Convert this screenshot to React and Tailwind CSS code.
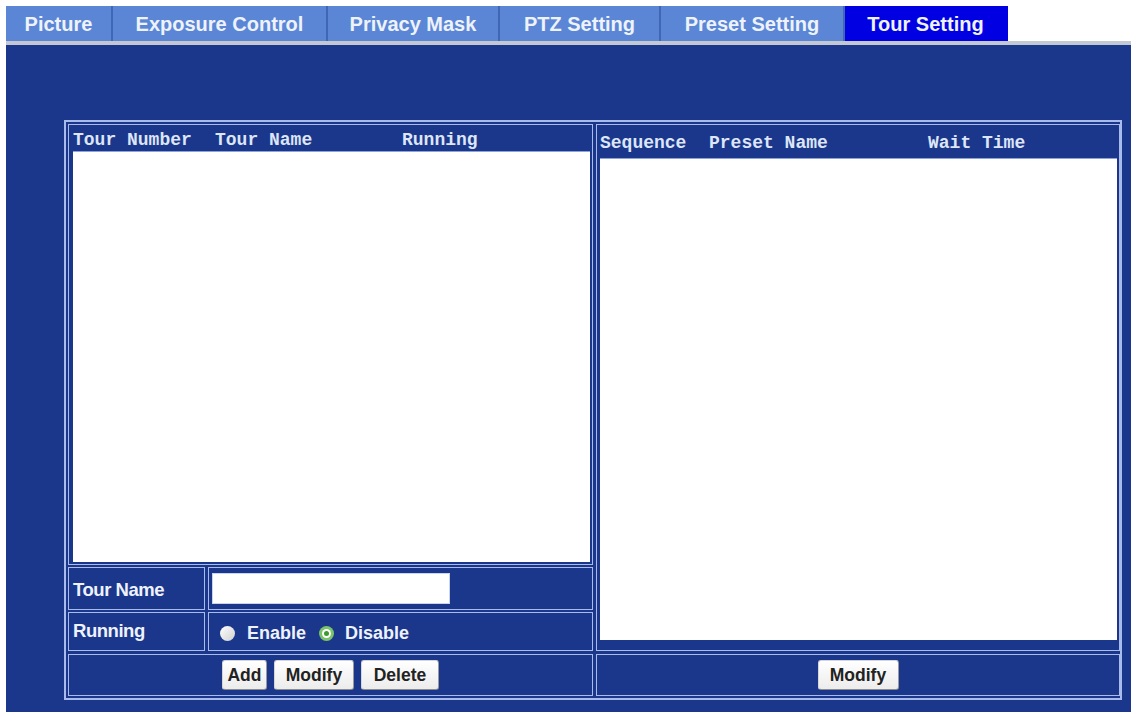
import React from 'react'

const tabs = [
  { label: 'Picture', w: 'w-[107px]' },
  { label: 'Exposure Control', w: 'w-[215px]' },
  { label: 'Privacy Mask', w: 'w-[172px]' },
  { label: 'PTZ Setting', w: 'w-[161px]' },
  { label: 'Preset Setting', w: 'w-[184px]' },
  { label: 'Tour Setting', w: 'w-[163px]', active: true },
]

function Btn({ children, w }) {
  return (
    <button className={`${w} h-[30px] rounded-[3px] border border-[#d6d6d6] border-b-[#8c8c8c] border-r-[#9a9a9a] bg-gradient-to-b from-white to-[#ececec] text-[17.5px] font-bold text-[#222]`}>
      {children}
    </button>
  )
}

export default function App() {
  const sans = { fontFamily: '"Liberation Sans", Arial, sans-serif' }
  const mono = 'font-["Liberation_Mono","Courier_New",monospace]'
  return (
    <div className="w-[1134px] h-[717px] bg-white overflow-hidden font-['Liberation_Sans',Arial,sans-serif]">
      {/* tabs */}
      <div className="flex pl-[6px] pt-[6px]">
        {tabs.map((t) => (
          <div key={t.label}
            className={`${t.w} h-[35px] flex items-center justify-center text-[20px] font-bold text-[#eef2fb] border-r-2 ${t.active ? 'bg-[#0000e3] border-[#0000e3]' : 'bg-[#5a86d5] border-[#4067b3]'}`}>
            {t.label}
          </div>
        ))}
      </div>
      <div className="ml-[6px] mr-[3px] h-[4px] bg-[#c3c8d2]" />

      {/* main panel */}
      <div className="ml-[6px] mr-[3px] h-[667px] bg-[#1a378c] pl-[58px] pr-[9px] pt-[75px] pb-[12px]">
        <div className="h-full border-2 border-[#a9bbea] p-[2px] grid grid-cols-[525px_524px] grid-rows-[1fr_42px] gap-[3px]">
          {/* left column */}
          <div className="flex flex-col gap-[2px]">
            <div className="flex-1 border border-[#a9bbea] flex flex-col pl-[4px] pr-[2px] pb-[2px]">
              <div className={`h-[26px] flex items-end pb-[2px] leading-none text-[18px] font-bold text-[#dde5f6] ${mono} whitespace-pre`}>
                <span className="w-[142px]">Tour Number</span>
                <span className="w-[187px]">Tour Name</span>
                <span>Running</span>
              </div>
              <div className="flex-1 bg-white border-t border-[#8ea3d8]" />
            </div>
            <div className="h-[43px] flex gap-[3px]">
              <div className="w-[137px] border border-[#a9bbea] flex items-center pl-[4px] pt-[2px] text-[18.5px] font-bold text-[#eef2fb] tracking-tight">Tour Name</div>
              <div className="flex-1 border border-[#a9bbea] flex items-center pl-[3px]">
                <input className="w-[238px] h-[31px] bg-white border border-[#c9d3ee] outline-none" />
              </div>
            </div>
            <div className="h-[39px] flex gap-[3px]">
              <div className="w-[137px] border border-[#a9bbea] flex items-center pl-[4px] pb-[1px] text-[18.5px] font-bold text-[#eef2fb] tracking-tight">Running</div>
              <div className="flex-1 border border-[#a9bbea] flex items-center pl-[11px] pt-[3px] text-[18px] font-bold text-[#eef2fb]">
                <span className="w-[15px] h-[15px] rounded-full bg-gradient-to-br from-white to-[#d0d0d0] mr-[12px]" />
                <span className="mr-[13px]">Enable</span>
                <span className="w-[15px] h-[15px] rounded-full bg-[#7cc36a] flex items-center justify-center mr-[11px]">
                  <span className="w-[9px] h-[9px] rounded-full bg-white flex items-center justify-center">
                    <span className="w-[5px] h-[5px] rounded-full bg-[#3e9a30]" />
                  </span>
                </span>
                <span>Disable</span>
              </div>
            </div>
          </div>

          {/* right column */}
          <div className="border border-[#a9bbea] flex flex-col pl-[3px] pr-[2px] pb-[10px]">
            <div className={`h-[33px] flex items-end pb-[6px] leading-none text-[18px] font-bold text-[#dde5f6] ${mono} whitespace-pre`}>
              <span className="w-[109px]">Sequence</span>
              <span className="w-[219px]">Preset Name</span>
              <span>Wait Time</span>
            </div>
            <div className="flex-1 bg-white border-t border-[#8ea3d8]" />
          </div>

          {/* button rows */}
          <div className="border border-[#a9bbea] flex items-center justify-center gap-[7px]" style={sans}>
            <Btn w="w-[45px]">Add</Btn>
            <Btn w="w-[80px]">Modify</Btn>
            <Btn w="w-[78px]">Delete</Btn>
          </div>
          <div className="border border-[#a9bbea] flex items-center justify-center" style={sans}>
            <Btn w="w-[81px]">Modify</Btn>
          </div>
        </div>
      </div>
    </div>
  )
}
